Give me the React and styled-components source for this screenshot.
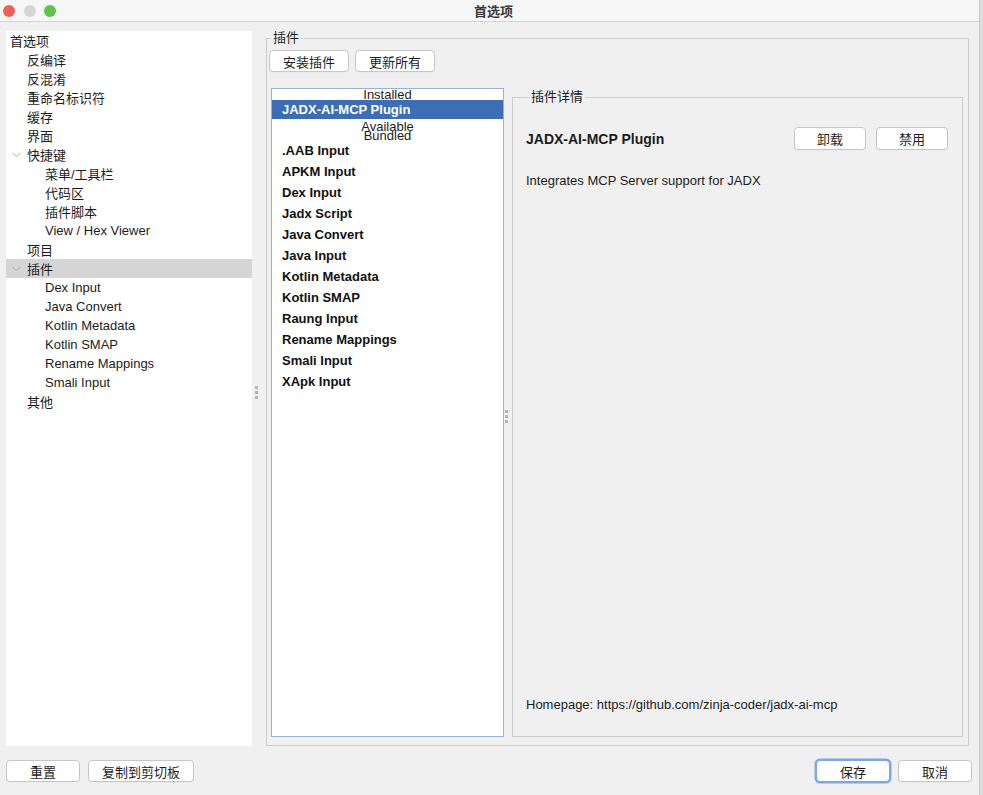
import React from 'react';
import styled, { createGlobalStyle } from "styled-components";

const GlobalStyle = createGlobalStyle`
    html, body {
        margin: 0;
        padding: 0;
        background: #dedede;
    }
    body {
        font-family: "Liberation Sans", "Noto Sans CJK SC", sans-serif;
        font-size: 13px;
        color: #1c1c1c;
    }
`;

const treeItems = [
    { label: "首选项", level: 0 },
    { label: "反编译", level: 1 },
    { label: "反混淆", level: 1 },
    { label: "重命名标识符", level: 1 },
    { label: "缓存", level: 1 },
    { label: "界面", level: 1 },
    { label: "快捷键", level: 1, open: true },
    { label: "菜单/工具栏", level: 2 },
    { label: "代码区", level: 2 },
    { label: "插件脚本", level: 2 },
    { label: "View / Hex Viewer", level: 2 },
    { label: "项目", level: 1 },
    { label: "插件", level: 1, open: true, selected: true },
    { label: "Dex Input", level: 2 },
    { label: "Java Convert", level: 2 },
    { label: "Kotlin Metadata", level: 2 },
    { label: "Kotlin SMAP", level: 2 },
    { label: "Rename Mappings", level: 2 },
    { label: "Smali Input", level: 2 },
    { label: "其他", level: 1 },
];

const bundled = [
    ".AAB Input", "APKM Input", "Dex Input", "Jadx Script", "Java Convert",
    "Java Input", "Kotlin Metadata", "Kotlin SMAP", "Raung Input",
    "Rename Mappings", "Smali Input", "XApk Input",
];

const Chevron = () => (
    <svg width="9" height="6" viewBox="0 0 9 6">
        <path d="M0.5 0.8 L4.5 4.8 L8.5 0.8" fill="none" stroke="#a8a8a8" strokeWidth="1" />
    </svg>
);

const Grip = () => (
    <GripDots>
        <span /><span /><span />
    </GripDots>
);

const App = () => {
    return (
        <>
            <GlobalStyle />
            <Window>
                <TitleBar>
                    <Lights>
                        <Light color="#ee5f57" />
                        <Light color="#d6d6d6" />
                        <Light color="#5fc44c" />
                    </Lights>
                    <Title>首选项</Title>
                    <span />
                </TitleBar>

                <Main>
                    <Tree>
                        {treeItems.map((item) => (
                            <TreeRow key={item.label} level={item.level} selected={item.selected}>
                                {item.level > 0 && <Toggle>{item.open && <Chevron />}</Toggle>}
                                {item.label}
                            </TreeRow>
                        ))}
                    </Tree>

                    <Splitter><Grip /></Splitter>

                    <Group>
                        <Legend>插件</Legend>
                        <Toolbar>
                            <Button>安装插件</Button>
                            <Button>更新所有</Button>
                        </Toolbar>
                        <SplitPane>
                            <PluginList>
                                <SectionHead size={11}>Installed</SectionHead>
                                <PluginRow selected>JADX-AI-MCP Plugin</PluginRow>
                                <SectionHead size={12} pad={3}>Available</SectionHead>
                                <SectionHead size={9}>Bundled</SectionHead>
                                {bundled.map((name) => (
                                    <PluginRow key={name}>{name}</PluginRow>
                                ))}
                            </PluginList>

                            <PaneSplitter><Grip /></PaneSplitter>

                            <Details>
                                <Legend>插件详情</Legend>
                                <DetailHeader>
                                    <PluginName>JADX-AI-MCP Plugin</PluginName>
                                    <DetailButtons>
                                        <Button wide>卸载</Button>
                                        <Button wide>禁用</Button>
                                    </DetailButtons>
                                </DetailHeader>
                                <Description>Integrates MCP Server support for JADX</Description>
                                <Homepage>Homepage: https://github.com/zinja-coder/jadx-ai-mcp</Homepage>
                            </Details>
                        </SplitPane>
                    </Group>
                </Main>

                <Footer>
                    <FooterSide>
                        <Button footer>重置</Button>
                        <Button footer>复制到剪切板</Button>
                    </FooterSide>
                    <FooterSide>
                        <Button footer primary>保存</Button>
                        <Button footer>取消</Button>
                    </FooterSide>
                </Footer>
            </Window>
        </>
    );
};

const Window = styled.div`
    width: 980px;
    height: 795px;
    background: #f0f0f0;
    border-right: 1px solid #c9c9c9;
    display: flex;
    flex-direction: column;
    box-sizing: border-box;
`;

const TitleBar = styled.div`
    height: 21px;
    flex-shrink: 0;
    background: #f6f6f7;
    border-bottom: 1px solid #d3d3d3;
    display: grid;
    grid-template-columns: 1fr auto 1fr;
    align-items: center;
`;

const Lights = styled.div`
    display: flex;
    gap: 8.5px;
    padding-left: 3px;
`;

const Light = styled.span`
    width: 12px;
    height: 12px;
    border-radius: 50%;
    background: ${(p) => p.color};
`;

const Title = styled.div`
    font-size: 13px;
    font-weight: bold;
    color: #3a3a3a;
    padding-left: 8px;
`;

const Main = styled.div`
    display: flex;
    height: 715px;
    padding: 9px 10px 0 6px;
`;

const Tree = styled.div`
    width: 246px;
    flex-shrink: 0;
    background: #ffffff;
`;

const TreeRow = styled.div`
    height: 19px;
    display: flex;
    align-items: center;
    padding-left: ${(p) => (p.level === 0 ? 4 : p.level === 1 ? 3 : 21)}px;
    background: ${(p) => (p.selected ? "#d5d5d5" : "transparent")};
    white-space: nowrap;
`;

const Toggle = styled.span`
    width: 18px;
    display: inline-flex;
    justify-content: flex-start;
    padding-left: 3px;
    box-sizing: border-box;
`;

const Splitter = styled.div`
    width: 14px;
    flex-shrink: 0;
    display: flex;
    align-items: center;
    padding-left: 3px;
    box-sizing: border-box;
    padding-top: 8px;
`;

const GripDots = styled.div`
    display: flex;
    flex-direction: column;
    gap: 2px;
    span {
        width: 3px;
        height: 3px;
        background: #b5b5b5;
    }
`;

const Group = styled.fieldset`
    flex: 1;
    margin: 0;
    padding: 5px 5px 4px 1px;
    border: 1px solid #cdcdcd;
    display: flex;
    flex-direction: column;
    min-width: 0;
`;

const Legend = styled.legend`
    padding: 0 2px;
    margin-left: 3px;
    font-size: 13px;
    line-height: 14px;
`;

const Toolbar = styled.div`
    display: flex;
    gap: 6px;
    padding-left: 1px;
`;

const Button = styled.button`
    font-family: "Liberation Sans", "Noto Sans CJK SC", sans-serif;
    font-size: 13px;
    color: #1c1c1c;
    background: #ffffff;
    border: 1px solid #c6c6c6;
    border-radius: 4px;
    height: ${(p) => (p.wide ? 23 : 22)}px;
    padding: 0 13px;
    min-width: ${(p) => (p.wide ? 72 : p.footer ? 74 : 0)}px;
    box-shadow: ${(p) => (p.primary ? "0 0 0 1.5px #7aa7ea" : "0 0.5px 0 rgba(0,0,0,0.05)")};
    border-color: ${(p) => (p.primary ? "#7aa7ea" : "#c6c6c6")};
`;

const SplitPane = styled.div`
    flex: 1;
    display: flex;
    margin-top: 16px;
    padding-left: 3px;
    min-height: 0;
`;

const PluginList = styled.div`
    width: 233px;
    flex-shrink: 0;
    background: #ffffff;
    border: 1px solid #98b1d6;
    box-sizing: border-box;
    margin-bottom: 4px;
`;

const SectionHead = styled.div`
    text-align: center;
    font-size: 13px;
    line-height: ${(p) => p.size - (p.pad || 0)}px;
    height: ${(p) => p.size - (p.pad || 0)}px;
    padding-top: ${(p) => p.pad || 0}px;
`;

const PluginRow = styled.div`
    height: ${(p) => (p.selected ? 19 : 21)}px;
    display: flex;
    align-items: center;
    padding-left: 10px;
    font-weight: bold;
    font-size: 13px;
    color: ${(p) => (p.selected ? "#ffffff" : "#111111")};
    background: ${(p) => (p.selected ? "#3d6eb5" : "transparent")};
`;

const PaneSplitter = styled.div`
    width: 8px;
    flex-shrink: 0;
    display: flex;
    align-items: center;
    padding-left: 1px;
    box-sizing: border-box;
    padding-top: 4px;
`;

const Details = styled.fieldset`
    flex: 1;
    margin: 2px 0 4px 0;
    padding: 23px 14px 24px 13px;
    border: 1px solid #cdcdcd;
    display: flex;
    flex-direction: column;
    min-width: 0;
`;

const DetailHeader = styled.div`
    display: flex;
    align-items: center;
    justify-content: space-between;
`;

const PluginName = styled.div`
    font-size: 14px;
    font-weight: bold;
`;

const DetailButtons = styled.div`
    display: flex;
    gap: 10px;
`;

const Description = styled.div`
    margin-top: 23px;
    font-size: 13px;
`;

const Homepage = styled.div`
    margin-top: auto;
    font-size: 13px;
`;

const Footer = styled.div`
    display: flex;
    justify-content: space-between;
    padding: 14px 7px 0 6px;
`;

const FooterSide = styled.div`
    display: flex;
    gap: 8px;
`;

export default App;
